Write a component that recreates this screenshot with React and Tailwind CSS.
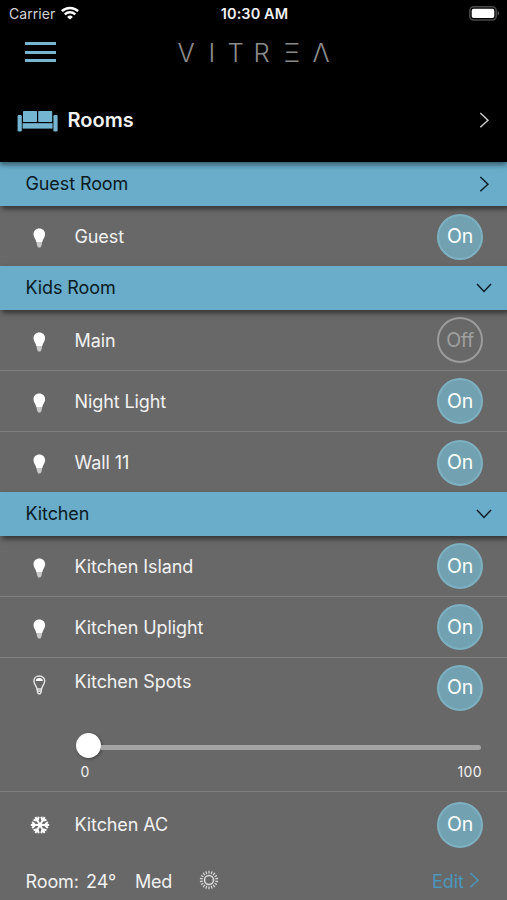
import React, { useState } from 'react';

const ROOMS = [
    {
        name: 'Guest Room',
        open: false,
        devices: [{ id: 'guest', name: 'Guest', on: true }],
    },
    {
        name: 'Kids Room',
        open: true,
        devices: [
            { id: 'main', name: 'Main', on: false },
            { id: 'night', name: 'Night Light', on: true },
            { id: 'wall', name: 'Wall 11', on: true },
        ],
    },
    {
        name: 'Kitchen',
        open: true,
        devices: [
            { id: 'island', name: 'Kitchen Island', on: true },
            { id: 'uplight', name: 'Kitchen Uplight', on: true },
            { id: 'spots', name: 'Kitchen Spots', on: true, type: 'dimmer' },
            { id: 'ac', name: 'Kitchen AC', on: true, type: 'ac' },
        ],
    },
];

const Chevron = ({ down, className }) => (
    <svg viewBox="0 0 16 16" fill="none" stroke="currentColor" strokeWidth="1.4" className={`w-4 h-4 ${className || ''}`}>
        {down ? <path d="M1 4 L8 11.5 L15 4" /> : <path d="M4.3 1 L12 8.2 L4.3 15.3" />}
    </svg>
);

const Wifi = () => (
    <svg viewBox="0 0 18 14" className="w-[18px] h-[14px] -mt-0.5" fill="none" stroke="white" strokeWidth="2.5">
        <path d="M0.9 5.2 A11.6 11.6 0 0 1 17.1 5.2" />
        <path d="M3.8 8.4 A7.4 7.4 0 0 1 14.2 8.4" />
        <path d="M9 13.6 L6.1 10.9 A4.2 4.2 0 0 1 11.9 10.9 Z" fill="white" stroke="none" />
    </svg>
);

const Battery = () => (
    <svg viewBox="0 0 31 15" className="w-[31px] h-[15px] -mt-0.5">
        <rect x="0.8" y="0.8" width="26.4" height="13.2" rx="3.8" fill="none" stroke="#4a4a4a" strokeWidth="1.5" />
        <rect x="2.7" y="2.8" width="22.6" height="9.2" rx="2" fill="white" />
        <path d="M28.6 5 Q30.4 6 30.4 7.4 Q30.4 8.8 28.6 9.8 Z" fill="#4a4a4a" />
    </svg>
);

const Sofa = () => (
    <svg viewBox="0 0 41 22" className="w-[41px] h-[22px] mt-px" fill="#74b6d1">
        <rect x="0.6" y="5" width="4.2" height="16.5" rx="1.2" />
        <rect x="36.4" y="5" width="4.2" height="16.5" rx="1.2" />
        <rect x="6" y="1" width="14" height="11" rx="0.8" />
        <rect x="21.2" y="1" width="14" height="11" rx="0.8" />
        <rect x="5.6" y="13.2" width="30" height="5.4" />
    </svg>
);

const Bulb = () => (
    <svg viewBox="0 0 14 20" className="w-[14px] h-5">
        <path d="M7.3 0.6 C3.9 0.6 1.5 3 1.5 6.2 C1.5 9 3.6 10.8 4.3 14 H10.3 C11 10.8 13.1 9 13.1 6.2 C13.1 3 10.7 0.6 7.3 0.6 Z" fill="white" />
        <path d="M4.4 14 H10.2 L9.5 17.6 L8.4 19.4 H6.2 L5.1 17.6 Z" fill="#c9c9c9" />
    </svg>
);

const DimBulb = () => (
    <svg viewBox="0 0 14 20" className="w-[14px] h-5" fill="none" stroke="#e4e4e4" strokeWidth="1.4">
        <path d="M7.3 1 C4 1 1.9 3.2 1.9 6 C1.9 9 4.3 10.8 5.1 14 H9.5 C10.3 10.8 12.7 9 12.7 6 C12.7 3.2 10.6 1 7.3 1 Z" />
        <path d="M3.7 6 C4 3.8 5.3 3 7.3 3 C9.3 3 10.6 3.8 10.9 6 Z" fill="white" stroke="none" />
        <path d="M5.1 14 L5.5 17.2 L6.5 18.8 H8.1 L9.1 17.2 L9.5 14 M5.3 16 H9.3" />
    </svg>
);

const Snowflake = () => (
    <svg viewBox="-10 -10 20 20" className="w-5 h-5" fill="none" stroke="white" strokeWidth="2">
        {[30, 90, 150, 210, 270, 330].map((angle) => (
            <g key={angle} transform={`rotate(${angle})`}>
                <path d="M0 0 V-9.2 M-3 -7.8 L0 -4.8 L3 -7.8" />
            </g>
        ))}
    </svg>
);

const Sun = () => (
    <svg viewBox="-10 -10 20 20" className="w-5 h-5" fill="none" stroke="#dedede">
        <circle r="4.5" strokeWidth="1.5" />
        {Array.from({ length: 18 }, (_, i) => (
            <path key={i} d="M0 -6.4 V-9.2" strokeWidth="1.2" transform={`rotate(${i * 20})`} />
        ))}
    </svg>
);

const PowerButton = ({ on, onClick }) => (
    <button
        onClick={onClick}
        className={`w-[46px] h-[46px] shrink-0 rounded-full border-2 text-[19.5px] leading-none tracking-[-0.3px] ${
            on ? 'bg-[#72a2b1] border-[#7db1c1] text-white' : 'border-[#9c9c9c] text-[#a0a0a0]'
        }`}
    >
        {on ? 'On' : 'Off'}
    </button>
);

const RoomHeader = ({ name, open }) => (
    <div className="relative flex items-center justify-between h-[43.5px] pl-[25.5px] pr-[15px] bg-[#69adca] text-[#0b1a22] shadow-[2px_3px_5px_rgba(0,0,0,0.5)]">
        <span className="text-[18px] leading-6 tracking-[-0.1px]">{name}</span>
        <Chevron down={open} className="mt-px" />
    </div>
);

const DeviceRow = ({ device, last, onToggle }) => {
    const border = last ? '' : 'border-b-[1.5px] border-[#808080]';

    if (device.type === 'dimmer') {
        return (
            <div className={`h-[134.5px] pt-[7px] ${border}`}>
                <div className="flex pl-8 pr-6">
                    <div className="pt-[10px] w-[42.5px]"><DimBulb /></div>
                    <span className="flex-1 pt-[5px] text-[18px] leading-6 tracking-[-0.1px]">{device.name}</span>
                    <PowerButton on={device.on} onClick={onToggle} />
                </div>
                <div className="flex items-center h-[26px] mt-[22px] ml-[76px] mr-[26px]">
                    <div className="w-[25px] h-[25px] rounded-full bg-white shadow-[1px_1px_3px_rgba(0,0,0,0.4)]" />
                    <div className="flex-1 h-[5px] mt-1 rounded-r-full bg-[#a3a3a3]" />
                </div>
                <div className="flex justify-between pl-[80.5px] pr-[25px] mt-[3px] text-[14px] leading-5">
                    <span>0</span>
                    <span className="tracking-[0.4px]">100</span>
                </div>
            </div>
        );
    }

    let height = last ? 'h-[60.5px] pt-[2px]' : 'h-[61px] pt-[1.5px]';
    if (device.type === 'ac') {
        height = 'h-[64px] pt-[2px]';
    }

    return (
        <div className={`flex items-center pl-8 pr-6 ${height} ${border}`}>
            <div className="w-[42.5px]">
                {device.type === 'ac' ? <div className="-ml-[2.5px]"><Snowflake /></div> : <div className="pt-[3px]"><Bulb /></div>}
            </div>
            <span className={`flex-1 text-[18px] leading-6 tracking-[-0.1px] ${last ? '' : 'pt-px'}`}>{device.name}</span>
            <PowerButton on={device.on} onClick={onToggle} />
        </div>
    );
};

const App = () => {
    const [rooms, setRooms] = useState(ROOMS);

    const toggleDevice = (id) => {
        setRooms(rooms.map((room) => ({
            ...room,
            devices: room.devices.map((d) => (d.id === id ? { ...d, on: !d.on } : d)),
        })));
    };

    return (
        <div className="w-full h-[900px] overflow-hidden flex flex-col bg-[#686868] text-[#f2f2f2] font-['Inter','Liberation_Sans',sans-serif]">
            <header className="relative z-10 h-[162px] shrink-0 bg-black shadow-[0_3px_5px_rgba(0,0,0,0.45)]">
                <div className="grid grid-cols-3 items-center h-7 pl-[9px] pr-[7px]">
                    <div className="flex items-center gap-1.5 text-[14px] tracking-[0.05px]">
                        <span className="-mt-px text-[#d4d4d4]">Carrier</span>
                        <Wifi />
                    </div>
                    <span className="text-center text-[14.5px] font-semibold tracking-[0.1px]">10:30 AM</span>
                    <div className="flex justify-end"><Battery /></div>
                </div>
                <div className="flex items-center h-12 pl-[25px]">
                    <button className="flex flex-col gap-[5.5px] w-[31px]">
                        <span className="h-[3px] bg-[#74b6d1]" />
                        <span className="h-[3px] bg-[#74b6d1]" />
                        <span className="h-[3px] bg-[#74b6d1]" />
                    </button>
                    <div className="flex ml-[121.5px] mt-px text-[25.5px] leading-none font-light text-[#8c8c8c]">
                        <span className="w-[31px]">V</span>
                        <span className="w-[19px]">I</span>
                        <span className="w-[26px]">T</span>
                        <span className="w-[30px]">R</span>
                        <span className="w-[29px]">Ξ</span>
                        <span>Λ</span>
                    </div>
                </div>
                <div className="flex items-center h-[88px] pl-[17px] pr-[15px]">
                    <Sofa />
                    <h1 className="flex-1 ml-[9.5px] text-[20px] font-semibold">Rooms</h1>
                    <Chevron className="text-[#cfcfcf]" />
                </div>
            </header>

            {rooms.map((room) => (
                <section key={room.name}>
                    <RoomHeader name={room.name} open={room.open} />
                    {room.devices.map((device, i) => (
                        <DeviceRow
                            key={device.id}
                            device={device}
                            last={i === room.devices.length - 1}
                            onToggle={() => toggleDevice(device.id)}
                        />
                    ))}
                </section>
            ))}

            <footer className="flex items-center h-[44px] pt-[6px] pl-[25.5px] pr-[25px] text-[18px]">
                <span className="w-[60.5px] tracking-[-0.1px]">Room:</span>
                <span className="w-[49px]">24°</span>
                <span className="w-[63.5px] tracking-[-0.2px]">Med</span>
                <div className="pb-[2px]"><Sun /></div>
                <button className="flex items-center gap-0.5 ml-auto text-[#4a98bd]">
                    Edit
                    <Chevron className="mb-0.5" />
                </button>
            </footer>
        </div>
    );
};

export default App;
